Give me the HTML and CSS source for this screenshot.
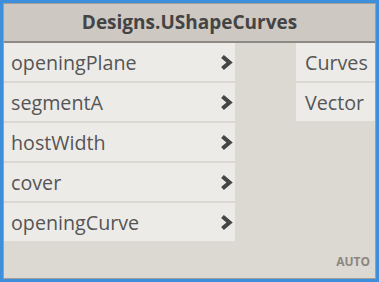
FILE: index.html
```html
<!DOCTYPE html>
<html lang="en">
<head>
  <meta charset="UTF-8" />
  <title>Designs.UShapeCurves</title>
  <link rel="stylesheet" href="styles.css">
</head>
<body>
  <div class="node">
    <div class="node-header">Designs.UShapeCurves</div>
    <div class="node-body">
      <div class="inputs">
        <div class="port in">openingPlane
          <svg class="chev" viewBox="0 0 13 17"><polyline points="2.5,2.5 9.5,8.5 2.5,14.5" /></svg>
        </div>
        <div class="port in">segmentA
          <svg class="chev" viewBox="0 0 13 17"><polyline points="2.5,2.5 9.5,8.5 2.5,14.5" /></svg>
        </div>
        <div class="port in">hostWidth
          <svg class="chev" viewBox="0 0 13 17"><polyline points="2.5,2.5 9.5,8.5 2.5,14.5" /></svg>
        </div>
        <div class="port in">cover
          <svg class="chev" viewBox="0 0 13 17"><polyline points="2.5,2.5 9.5,8.5 2.5,14.5" /></svg>
        </div>
        <div class="port in">openingCurve
          <svg class="chev" viewBox="0 0 13 17"><polyline points="2.5,2.5 9.5,8.5 2.5,14.5" /></svg>
        </div>
      </div>
      <div class="outputs">
        <div class="port out">Curves</div>
        <div class="port out">Vector</div>
      </div>
    </div>
    <div class="node-footer">AUTO</div>
  </div>
</body>
</html>
```

FILE: styles.css
```css
body {
  margin: 0;
  padding: 3px;
  background: #3e8fdb;
  font-family: "Open Sans", "DejaVu Sans", sans-serif;
}
.node {
  width: 371px;
  height: 274px;
  border: 1px solid #a19e99;
  background: #dcd9d3;
  display: flex;
  flex-direction: column;
}
.node-header {
  height: 37px;
  line-height: 37px;
  background: #cdc8c2;
  border-bottom: 2px solid #8d8a86;
  text-align: center;
  font-size: 19px;
  font-weight: 700;
  color: #444;
}
.node-body {
  display: flex;
  justify-content: space-between;
}
.inputs,
.outputs {
  display: flex;
  flex-direction: column;
  gap: 2px;
}
.inputs {
  width: 231px;
}
.outputs {
  width: 79px;
}
.port {
  height: 38px;
  background: #edebe8;
  display: flex;
  align-items: center;
  font-size: 19.7px;
  color: #555;
}
.port.in {
  justify-content: space-between;
  padding: 0 2px 0 7px;
}
.port.out {
  padding-left: 9px;
}
.chev {
  width: 13px;
  height: 17px;
}
.chev polyline {
  fill: none;
  stroke: #454545;
  stroke-width: 4.2;
}
.node-footer {
  margin-top: auto;
  text-align: right;
  padding: 0 5px 8px 0;
  font-size: 12px;
  font-weight: 700;
  color: #8b8680;
}
```
